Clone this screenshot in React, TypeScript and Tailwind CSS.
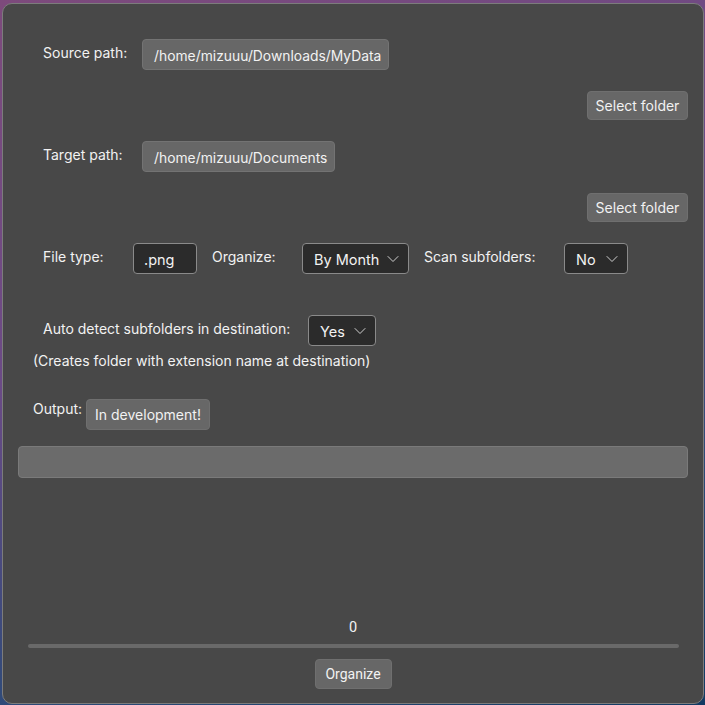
import React from "react";

function Chevron() {
  return (
    <svg width="12" height="8" viewBox="0 0 12 8" fill="none" className="shrink-0">
      <path d="M1 1.5 L6 6.5 L11 1.5" stroke="#cfcfcf" strokeWidth="1" strokeLinecap="round" strokeLinejoin="round" />
    </svg>
  );
}

function Select({ value, width }: { value: string; width: string }) {
  return (
    <div
      className={`${width} h-[31px] flex items-center justify-between pl-[11px] pr-[9px] rounded-[4px] border border-[#8a8a8a] bg-[#2b2b2b] text-[14.5px] text-[#f2f2f2]`}
    >
      <span className="pt-[2px]">{value}</span>
      <Chevron />
    </div>
  );
}

function PathBox({ value }: { value: string }) {
  return (
    <div className="h-[31px] flex items-center pl-[11px] pr-[7px] rounded-[4px] border border-[#737373] bg-[#676767] text-[13.85px] text-[#f2f2f2]">
      <span className="pt-[2px]">{value}</span>
    </div>
  );
}

function GrayButton({ label, className = "" }: { label: string; className?: string }) {
  return (
    <div
      className={`flex items-center justify-center rounded-[4px] border border-[#6f6f6f] bg-[#676767] text-[14px] text-[#f2f2f2] ${className}`}
    >
      {label}
    </div>
  );
}

export default function App() {
  return (
    <div
      className="w-[705px] h-[705px] pt-[3px] pl-[2px] pr-[1px] pb-[1px] bg-[linear-gradient(160deg,#7d4a7c_0%,#6b4a86_40%,#2c4a78_75%,#123a63_100%)]"
      style={{ fontFamily: "Inter, 'Noto Sans', sans-serif" }}
    >
      <div className="w-full h-full flex flex-col rounded-[10px] border border-[#7c7c7c] bg-[#484848] text-[#f2f2f2] text-[14px] leading-[20px]">
        {/* Source path */}
        <div className="mt-[35px] h-[31px] flex items-start pl-[40px]">
          <div className="w-[99px] pt-[4px]">Source path:</div>
          <PathBox value="/home/mizuuu/Downloads/MyData" />
        </div>
        <div className="mt-[21px] flex justify-end pr-[15px]">
          <GrayButton label="Select folder" className="w-[101px] h-[29px]" />
        </div>

        {/* Target path */}
        <div className="mt-[21px] h-[31px] flex items-start pl-[40px]">
          <div className="w-[99px] pt-[4px]">Target path:</div>
          <PathBox value="/home/mizuuu/Documents" />
        </div>
        <div className="mt-[21px] flex justify-end pr-[15px]">
          <GrayButton label="Select folder" className="w-[101px] h-[29px]" />
        </div>

        {/* File type row */}
        <div className="mt-[21px] h-[31px] flex items-start pl-[40px]">
          <div className="w-[90px] pt-[4px]">File type:</div>
          <div className="w-[64px] h-[31px] flex items-center pl-[10px] rounded-[4px] border border-[#8a8a8a] bg-[#2b2b2b] text-[14.5px]">
            <span className="pt-[2px]">.png</span>
          </div>
          <div className="ml-[15px] w-[90px] pt-[4px]">Organize:</div>
          <Select value="By Month" width="w-[107px]" />
          <div className="ml-[15px] w-[140px] pt-[4px]">Scan subfolders:</div>
          <Select value="No" width="w-[64px]" />
        </div>

        {/* Auto detect */}
        <div className="mt-[41px] h-[31px] flex items-start pl-[40px]">
          <div className="w-[265px] pt-[4px]">Auto detect subfolders in destination:</div>
          <Select value="Yes" width="w-[68px]" />
        </div>
        <div className="mt-[5px] pl-[30px] leading-[20px]">(Creates folder with extension name at destination)</div>

        {/* Output */}
        <div className="mt-[28px] h-[31px] flex items-start pl-[30px]">
          <div className="w-[53px] pt-[0px]">Output:</div>
          <GrayButton label="In development!" className="w-[124px] h-[31px] pt-[1px]" />
        </div>

        <div className="mt-[16px] mx-[15px] h-[32px] rounded-[4px] border border-[#7a7a7a] bg-[#6b6b6b]" />

        <div className="flex-1" />

        <div className="flex flex-col items-center" style={{ fontFamily: "Roboto, 'Noto Sans', sans-serif" }}>
          <div className="leading-[20px] text-[14.5px]">0</div>
          <div className="mt-[6px] self-stretch ml-[25px] mr-[24px] h-[4px] rounded-full bg-[#696969]" />
          <GrayButton label="Organize" className="mt-[11px] w-[77px] h-[30px] mb-[14px] text-[14.5px]" />
        </div>
      </div>
    </div>
  );
}
